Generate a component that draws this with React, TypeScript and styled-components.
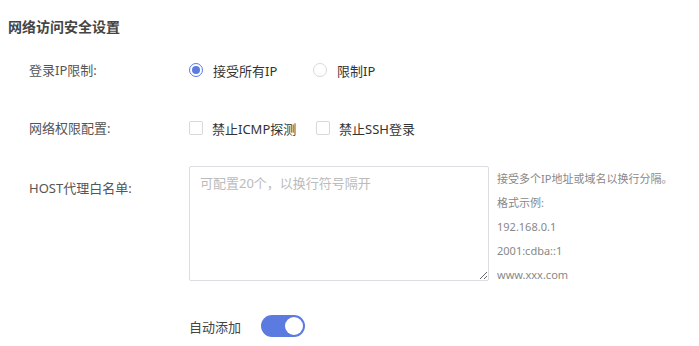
import React, { useState } from 'react'
import styled, { createGlobalStyle } from 'styled-components'

const GlobalStyle = createGlobalStyle`
  body {
    margin: 0;
    background: #fff;
    font-family: "Noto Sans", "Noto Sans CJK SC", sans-serif;
  }
`

const Page = styled.div`
  padding: 17px 0 0 8px;
  width: 699px;
  height: 346px;
  box-sizing: border-box;
  overflow: hidden;
`

const Title = styled.div`
  font-size: 14px;
  font-weight: 700;
  line-height: 20px;
  color: #444;
`

const Form = styled.div`
  padding-left: 21px;
`

const Row = styled.div<{ $mt: number; $align?: string }>`
  display: flex;
  align-items: ${(p) => p.$align || 'center'};
  margin-top: ${(p) => p.$mt}px;
  min-height: 30px;
`

const Label = styled.div<{ $pt?: number }>`
  width: 160px;
  flex-shrink: 0;
  font-size: 13px;
  line-height: 20px;
  color: #555;
  padding-top: ${(p) => p.$pt || 0}px;
`

const Options = styled.div`
  display: flex;
  align-items: center;
`

const Option = styled.label<{ $w: number }>`
  display: flex;
  align-items: center;
  width: ${(p) => p.$w}px;
  font-size: 13px;
  color: #333;
  cursor: pointer;
`

const RadioDot = styled.span<{ $on: boolean }>`
  width: 14px;
  height: 14px;
  border-radius: 50%;
  box-sizing: border-box;
  border: 1px solid ${(p) => (p.$on ? '#5b7be0' : '#d9d9d9')};
  margin-right: 10px;
  display: flex;
  align-items: center;
  justify-content: center;
  &::after {
    content: '';
    width: 8px;
    height: 8px;
    border-radius: 50%;
    background: ${(p) => (p.$on ? '#5b7be0' : 'transparent')};
  }
`

const CheckBox = styled.span`
  width: 14px;
  height: 14px;
  border-radius: 2px;
  box-sizing: border-box;
  border: 1px solid #d9d9d9;
  margin-right: 9px;
`

const TextArea = styled.textarea`
  width: 300px;
  height: 115px;
  box-sizing: border-box;
  border: 1px solid #dcdde3;
  border-radius: 2px;
  padding: 6px 10px;
  font-family: inherit;
  font-size: 13px;
  line-height: 20px;
  color: #333;
  outline: none;
  &::placeholder {
    color: #bbb;
  }
`

const Help = styled.div`
  margin-left: 8px;
  padding-top: 1px;
  font-size: 11px;
  line-height: 24px;
  color: #888;
`

const SubLabel = styled.span`
  font-size: 13px;
  color: #444;
  margin-right: 20px;
`

const Switch = styled.button<{ $on: boolean }>`
  width: 44px;
  height: 22px;
  border-radius: 11px;
  border: none;
  padding: 2px;
  background: ${(p) => (p.$on ? '#5b7be0' : '#ccc')};
  display: flex;
  justify-content: ${(p) => (p.$on ? 'flex-end' : 'flex-start')};
  cursor: pointer;
  &::after {
    content: '';
    width: 18px;
    height: 18px;
    border-radius: 50%;
    background: #fff;
  }
`

const App: React.FC = () => {
  const [mode, setMode] = useState('all')
  const [auto, setAuto] = useState(true)
  return (
    <Page>
      <GlobalStyle />
      <Title>网络访问安全设置</Title>
      <Form>
        <Row $mt={18}>
          <Label>登录IP限制:</Label>
          <Options>
            <Option $w={124} onClick={() => setMode('all')}>
              <RadioDot $on={mode === 'all'} />
              接受所有IP
            </Option>
            <Option $w={100} onClick={() => setMode('limit')}>
              <RadioDot $on={mode === 'limit'} />
              限制IP
            </Option>
          </Options>
        </Row>
        <Row $mt={28}>
          <Label>网络权限配置:</Label>
          <Options>
            <Option $w={127}>
              <CheckBox />
              禁止ICMP探测
            </Option>
            <Option $w={120}>
              <CheckBox />
              禁止SSH登录
            </Option>
          </Options>
        </Row>
        <Row $mt={23} $align="flex-start">
          <Label $pt={12}>HOST代理白名单:</Label>
          <TextArea placeholder="可配置20个，以换行符号隔开" />
          <Help>
            <div>接受多个IP地址或域名以换行分隔。</div>
            <div>格式示例:</div>
            <div>192.168.0.1</div>
            <div>2001:cdba::1</div>
            <div>www.xxx.com</div>
          </Help>
        </Row>
        <Row $mt={24}>
          <Label />
          <SubLabel>自动添加</SubLabel>
          <Switch $on={auto} onClick={() => setAuto(!auto)} />
        </Row>
      </Form>
    </Page>
  )
}

export default App
